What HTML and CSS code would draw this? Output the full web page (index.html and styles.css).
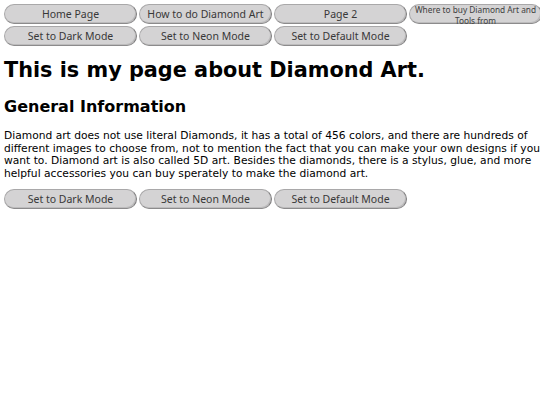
FILE: index.html
```html
<!DOCTYPE html>
<html>
<head>
<meta charset="utf-8">
<title>Diamond Art</title>
<link rel="stylesheet" href="styles.css">
</head>
<body>
<nav class="nav">
  <div class="row">
    <button class="btn">Home Page</button>
    <button class="btn">How to do Diamond Art</button>
    <button class="btn">Page 2</button>
    <button class="btn small">Where to buy Diamond Art and Tools from</button>
  </div>
  <div class="row">
    <button class="btn">Set to Dark Mode</button>
    <button class="btn">Set to Neon Mode</button>
    <button class="btn">Set to Default Mode</button>
  </div>
</nav>
<h1 class="title">This is my page about Diamond Art.</h1>
<h2 class="subtitle">General Information</h2>
<p class="text">Diamond art does not use literal Diamonds, it has a total of 456 colors, and there are hundreds of different images to choose from, not to mention the fact that you can make your own designs if you want to. Diamond art is also called 5D art. Besides the diamonds, there is a stylus, glue, and more helpful accessories you can buy sperately to make the diamond art.</p>
<div class="row">
  <button class="btn">Set to Dark Mode</button>
  <button class="btn">Set to Neon Mode</button>
  <button class="btn">Set to Default Mode</button>
</div>
</body>
</html>
```
FILE: styles.css
```css
html, body {
  margin: 0;
  padding: 0;
  background: #fff;
  overflow: hidden;
}
body {
  padding: 4px 0 0 4px;
  font-family: "DejaVu Sans", Verdana, sans-serif;
  color: #000;
}
.nav {
  display: flex;
  flex-direction: column;
  gap: 2px;
}
.row {
  display: flex;
  gap: 2px;
}
.btn {
  flex: 0 0 133px;
  width: 133px;
  height: 20px;
  margin: 0;
  padding: 0 2px;
  border-radius: 10px;
  background: #d4d3d4;
  border: 1px solid #a9a8a9;
  border-right-color: #7e7d7e;
  border-bottom-color: #8c8b8c;
  box-shadow: inset -1px -1px 0 #bdbcbd;
  font-family: "Noto Sans", "Open Sans", sans-serif;
  font-size: 10.5px;
  color: #383838;
  line-height: 1;
}
.btn.small {
  font-size: 8.3px;
  line-height: 10.5px;
  padding: 0;
  color: #404040;
}
.title {
  margin: 12px 0 0;
  font-size: 20.8px;
  font-weight: bold;
  line-height: 24px;
}
.subtitle {
  margin: 15px 0 0;
  font-size: 16px;
  font-weight: bold;
  line-height: 20px;
}
.text {
  width: 541px;
  margin: 13px 0 8px;
  font-size: 10.7px;
  line-height: 12.7px;
}
```
